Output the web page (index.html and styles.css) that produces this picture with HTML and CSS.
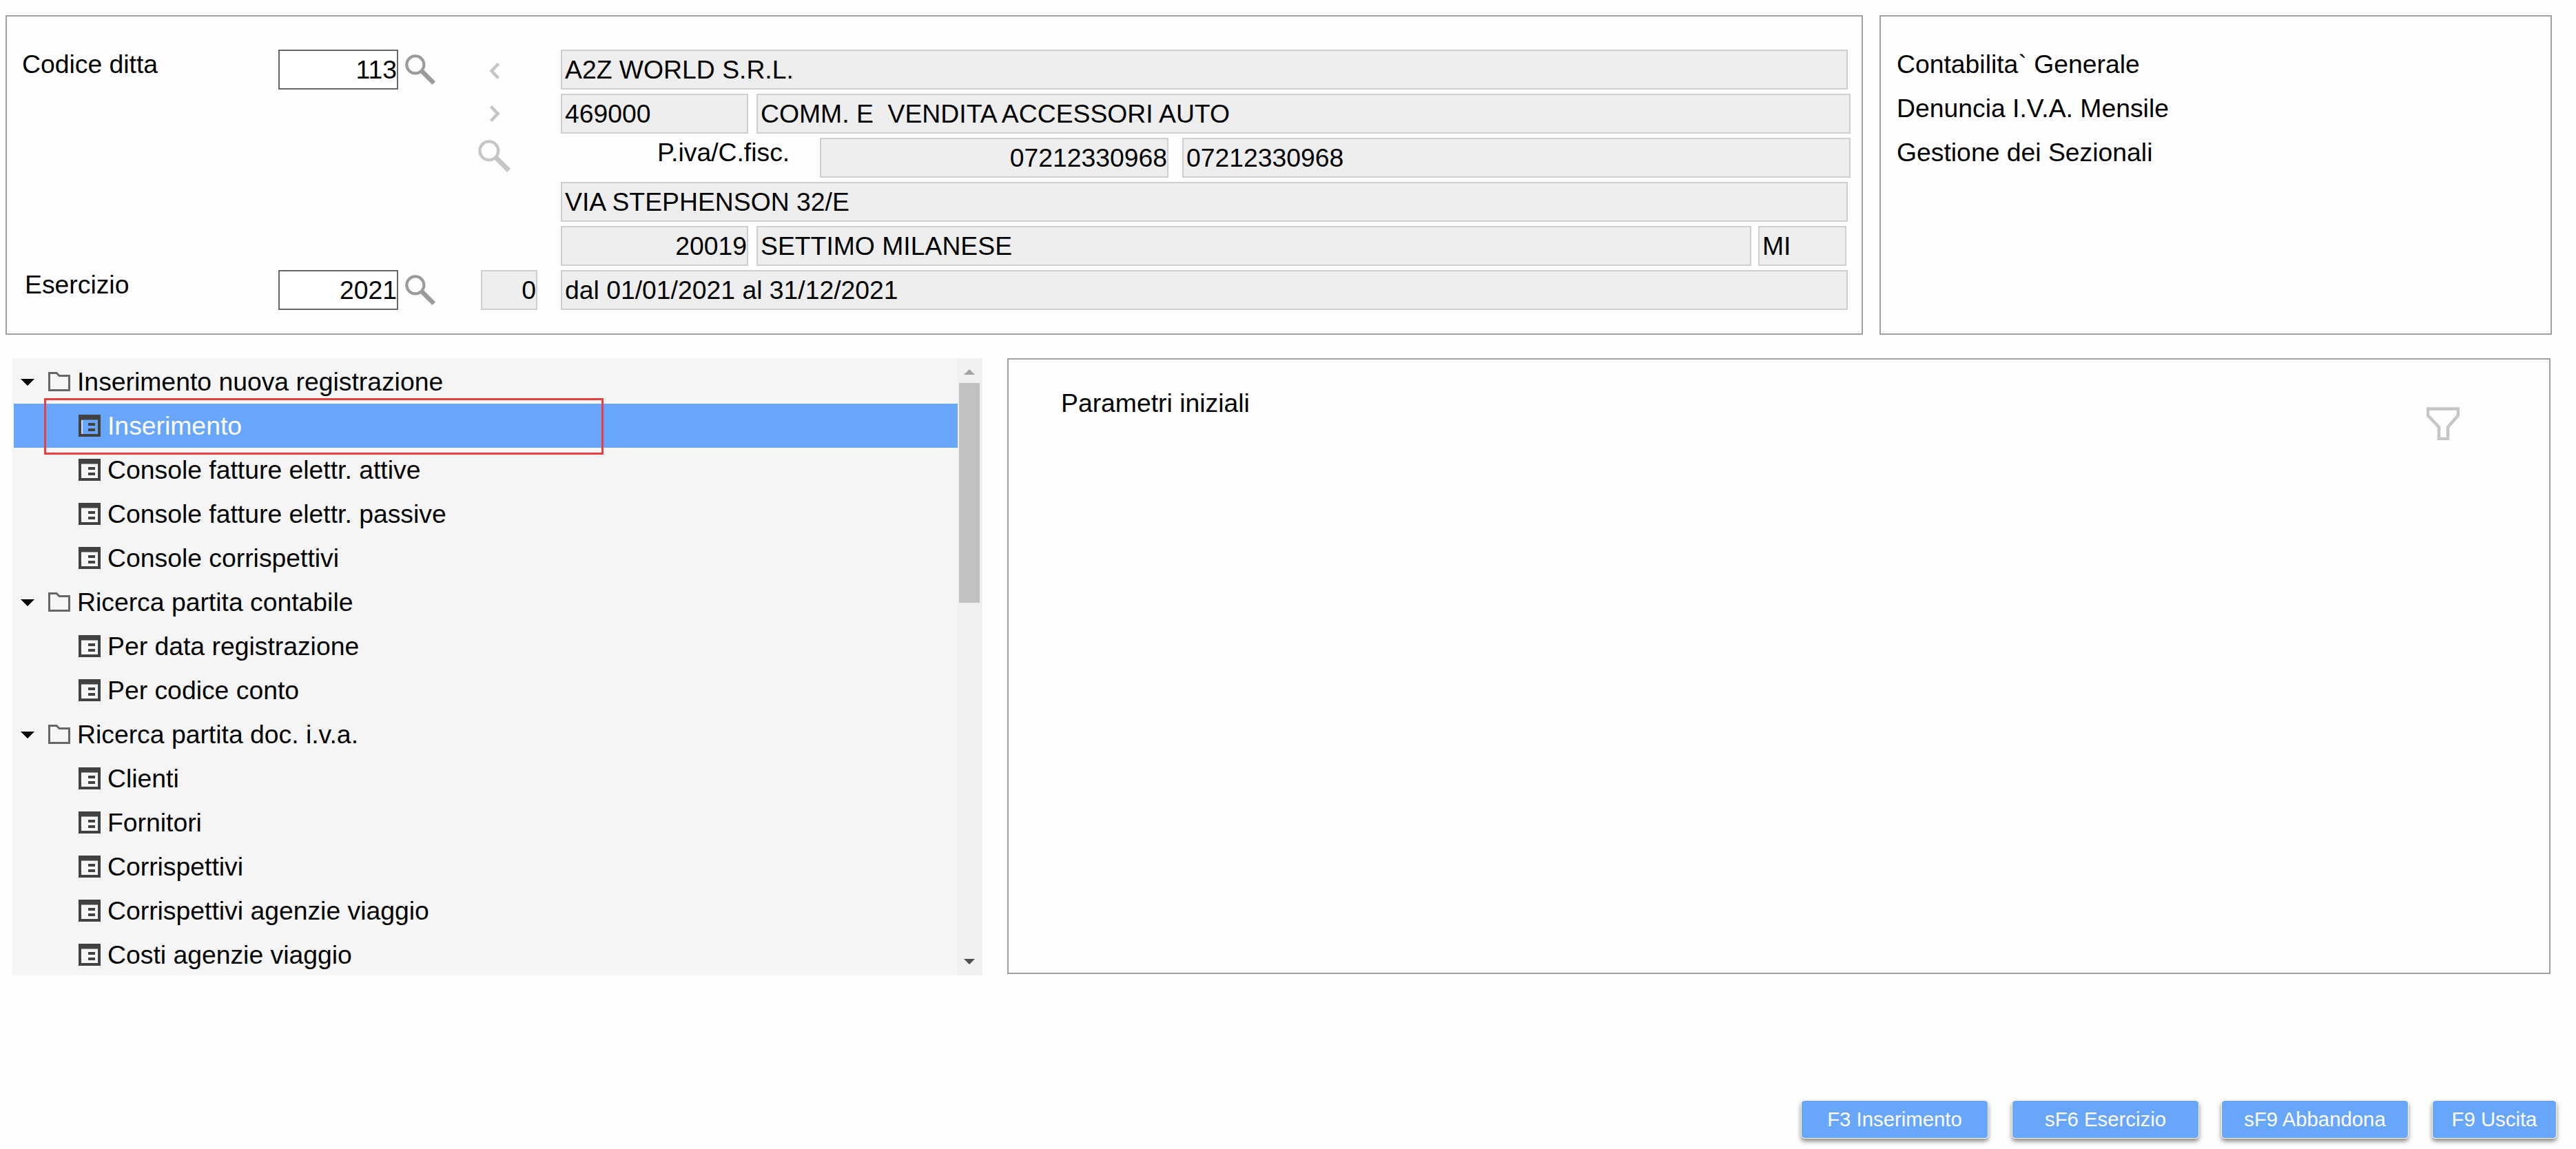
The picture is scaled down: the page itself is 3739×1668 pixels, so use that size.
FILE: index.html
```html
<!DOCTYPE html>
<html lang="it">
<head>
    <meta charset="UTF-8">
    <title>Contabilita` Generale</title>
    <link rel="stylesheet" href="styles.css">
</head>
<body>
    <!-- icone condivise -->
    <svg class="sprite" width="0" height="0">
        <symbol id="icon-search" viewBox="0 0 48 48">
            <circle cx="15.8" cy="15.8" r="13.4" fill="none" stroke="currentColor" stroke-width="4.4"/>
            <path d="M25 25L44.5 44.5" fill="none" stroke="currentColor" stroke-width="7"/>
        </symbol>
        <symbol id="icon-folder" viewBox="0 0 32 32">
            <path d="M1.5 3.5H12L16 7.5H30.5V28.5H1.5Z" fill="none" stroke="currentColor" stroke-width="3"/>
        </symbol>
        <symbol id="icon-form" viewBox="0 0 32 32">
            <path d="M4 8H6V28H4Z" fill="#fff" fill-opacity="0.7"/>
            <path d="M0 0H32V32H0ZM4 7.5V28H28V7.5ZM14 12H24V16H14ZM14 20H24V24H14Z" fill="#424242" fill-rule="evenodd"/>
        </symbol>
    </svg>

    <div class="page">
        <div class="top-row">
            <div class="panel company">
                <div class="col-label">
                    <label>Codice ditta</label>
                    <label class="year-label">Esercizio</label>
                </div>
                <div class="col-code">
                    <div class="code-line">
                        <div class="field edit num">113</div>
                        <svg class="lookup"><use href="#icon-search"/></svg>
                    </div>
                    <div class="code-line">
                        <div class="field edit num">2021</div>
                        <svg class="lookup"><use href="#icon-search"/></svg>
                    </div>
                </div>
                <div class="col-nav">
                    <svg class="arrow" viewBox="0 0 16 24"><path d="M13.5 1.5L3.5 12L13.5 22.5"/></svg>
                    <svg class="arrow" viewBox="0 0 16 24"><path d="M2.5 1.5L12.5 12L2.5 22.5"/></svg>
                    <svg class="search-off"><use href="#icon-search"/></svg>
                    <div class="field num progr">0</div>
                </div>
                <div class="col-data">
                    <div class="line"><div class="field w-full">A2Z WORLD S.R.L.</div></div>
                    <div class="line">
                        <div class="field w-code">469000</div>
                        <div class="field w-desc">COMM. E&nbsp; VENDITA ACCESSORI AUTO</div>
                    </div>
                    <div class="line">
                        <label class="iva-label">P.iva/C.fisc.</label>
                        <div class="field num w-iva">07212330968</div>
                        <div class="field w-fisc">07212330968</div>
                    </div>
                    <div class="line"><div class="field w-full">VIA STEPHENSON 32/E</div></div>
                    <div class="line">
                        <div class="field num w-code">20019</div>
                        <div class="field w-city">SETTIMO MILANESE</div>
                        <div class="field w-prov">MI</div>
                    </div>
                    <div class="line"><div class="field w-full">dal 01/01/2021 al 31/12/2021</div></div>
                </div>
            </div>
            <div class="panel info">
                <label>Contabilita` Generale</label>
                <label>Denuncia I.V.A. Mensile</label>
                <label>Gestione dei Sezionali</label>
            </div>
        </div>

        <div class="main-row">
            <div class="tree">
                <ul class="tree-list">
                    <li class="node"><span class="caret"></span><svg><use href="#icon-folder"/></svg>Inserimento nuova registrazione</li>
                    <li class="leaf active"><svg><use href="#icon-form"/></svg>Inserimento</li>
                    <li class="leaf"><svg><use href="#icon-form"/></svg>Console fatture elettr. attive</li>
                    <li class="leaf"><svg><use href="#icon-form"/></svg>Console fatture elettr. passive</li>
                    <li class="leaf"><svg><use href="#icon-form"/></svg>Console corrispettivi</li>
                    <li class="node"><span class="caret"></span><svg><use href="#icon-folder"/></svg>Ricerca partita contabile</li>
                    <li class="leaf"><svg><use href="#icon-form"/></svg>Per data registrazione</li>
                    <li class="leaf"><svg><use href="#icon-form"/></svg>Per codice conto</li>
                    <li class="node"><span class="caret"></span><svg><use href="#icon-folder"/></svg>Ricerca partita doc. i.v.a.</li>
                    <li class="leaf"><svg><use href="#icon-form"/></svg>Clienti</li>
                    <li class="leaf"><svg><use href="#icon-form"/></svg>Fornitori</li>
                    <li class="leaf"><svg><use href="#icon-form"/></svg>Corrispettivi</li>
                    <li class="leaf"><svg><use href="#icon-form"/></svg>Corrispettivi agenzie viaggio</li>
                    <li class="leaf"><svg><use href="#icon-form"/></svg>Costi agenzie viaggio</li>
                </ul>
                <div class="scrollbar">
                    <span class="scroll-up"></span>
                    <div class="thumb"></div>
                    <span class="scroll-down"></span>
                </div>
                <div class="highlight"></div>
            </div>
            <div class="panel params">
                <label>Parametri iniziali</label>
                <svg class="filter" viewBox="0 0 48 48"><path d="M2 2.5H46V12L31 29V46H18V29L2 12Z"/></svg>
            </div>
        </div>

        <div class="buttons">
            <button>F3 Inserimento</button>
            <button>sF6 Esercizio</button>
            <button class="abandon">sF9 Abbandona</button>
            <button class="exit">F9 Uscita</button>
        </div>
    </div>
</body>
</html>
```

FILE: styles.css
```css
* {
    box-sizing: border-box;
}
body {
    margin: 0;
    background-color: #fefefe;
    font-family: Arial, "Liberation Sans", sans-serif;
    font-size: 37.33px;
    color: #000;
}
.sprite {
    display: block;
}
svg {
    display: block;
    flex: none;
}
label {
    display: block;
    line-height: 42px;
    white-space: nowrap;
}
.page {
    width: 3739px;
    height: 1668px;
    padding: 22px 28px 0 8px;
    overflow: hidden;
}
.panel {
    border: 2px solid #a0a0a0;
}
.top-row {
    display: flex;
    gap: 24px;
    height: 464px;
}

/* dati ditta */
.company {
    display: flex;
    width: 2696px;
    padding-top: 48px;
}
.col-label {
    width: 394px;
    padding-left: 22px;
}
.year-label {
    margin-top: 278px;
    padding-left: 4px;
}
.col-code {
    width: 294px;
}
.code-line {
    display: flex;
    gap: 10px;
    margin-bottom: 262px;
}
.lookup {
    width: 45px;
    height: 45px;
    margin-top: 7px;
    color: #9b9b9b;
}
.col-nav {
    width: 116px;
}
.arrow {
    width: 16px;
    height: 24px;
    margin: 19px 0 38px 12px;
    fill: none;
    stroke: #c6c6c6;
    stroke-width: 4.6;
}
.search-off {
    width: 48px;
    height: 48px;
    margin: -12px 0 141px -4px;
    color: #c6c6c6;
}
.field {
    height: 58px;
    padding: 0 0 0 4px;
    border: 2px solid #cfcfcf;
    background-color: #eee;
    line-height: 54px;
    white-space: nowrap;
}
.field.edit {
    width: 174px;
    border-color: #666;
    background-color: #fff;
}
.field.num {
    text-align: right;
}
.field.progr {
    width: 82px;
}
.line {
    display: flex;
    height: 58px;
    margin-bottom: 6px;
}
.w-full {
    width: 1868px;
}
.w-code {
    width: 272px;
    margin-right: 12px;
}
.w-desc {
    width: 1588px;
}
.iva-label {
    width: 376px;
    padding-left: 140px;
}
.w-iva {
    width: 506px;
    margin-right: 20px;
}
.w-fisc {
    width: 970px;
}
.w-city {
    width: 1444px;
    margin-right: 10px;
}
.w-prov {
    width: 128px;
}
.info {
    width: 976px;
    padding: 48px 0 0 23px;
}
.info label {
    margin-bottom: 22px;
}

/* menu e parametri */
.main-row {
    display: flex;
    gap: 36px;
    margin: 34px 0 0 10px;
}
.tree {
    position: relative;
    display: flex;
    width: 1408px;
    height: 896px;
    padding: 2px 0 0 2px;
    overflow: hidden;
    background-color: #f5f5f5;
}
.tree-list {
    width: 1370px;
    margin: 0;
    padding: 0;
    list-style: none;
}
.tree-list li {
    display: flex;
    align-items: center;
    height: 64px;
    line-height: 64px;
    white-space: nowrap;
}
.tree-list svg {
    width: 32px;
    height: 32px;
    color: #666;
}
.node {
    padding-left: 10px;
}
.node svg {
    margin: 0 10px 0 20px;
}
.caret {
    border: 10px solid transparent;
    border-top-color: #000;
    border-bottom: 0;
    margin-top: 2px;
}
.leaf {
    padding-left: 94px;
}
.leaf svg {
    margin-right: 10px;
}
.tree-list .active {
    background-color: #68a6fb;
    color: #fff;
}
.scrollbar {
    display: flex;
    flex-direction: column;
    width: 36px;
    height: 896px;
    margin-top: -2px;
    padding: 16px 4px 16px 2px;
    background-color: #f0f0f0;
}
.scroll-up,
.scroll-down {
    align-self: center;
    border: 8px solid transparent;
}
.scroll-up {
    border-top: 0;
    border-bottom-color: #a3a3a3;
}
.scroll-down {
    margin-top: auto;
    border-bottom: 0;
    border-top-color: #505050;
}
.thumb {
    height: 319px;
    margin-top: 12px;
    background-color: #c1c1c1;
}
/* riquadro rosso sopra la voce selezionata */
.highlight {
    position: absolute;
    top: 58px;
    left: 46px;
    width: 812px;
    height: 82px;
    border: 3px solid #e84040;
}
.params {
    display: flex;
    justify-content: space-between;
    width: 2240px;
    height: 894px;
    padding: 42px 130px 0 76px;
}
.filter {
    width: 48px;
    height: 48px;
    margin-top: 27px;
    fill: none;
    stroke: #c6c6c6;
    stroke-width: 4.6;
}

/* tasti funzione */
.buttons {
    display: flex;
    justify-content: flex-end;
    gap: 34px;
    margin-top: 181px;
}
.buttons button {
    width: 272px;
    height: 56px;
    padding: 0;
    border: 1px solid #fff;
    border-radius: 5px;
    background-color: #68a6fb;
    background-clip: padding-box;
    box-shadow: 0 4px 6px rgba(0, 0, 0, 0.45);
    color: #fff;
    font-family: inherit;
    font-size: 29.33px;
}
.buttons .abandon {
    margin-left: -2px;
}
.buttons .exit {
    width: 181px;
}
```
